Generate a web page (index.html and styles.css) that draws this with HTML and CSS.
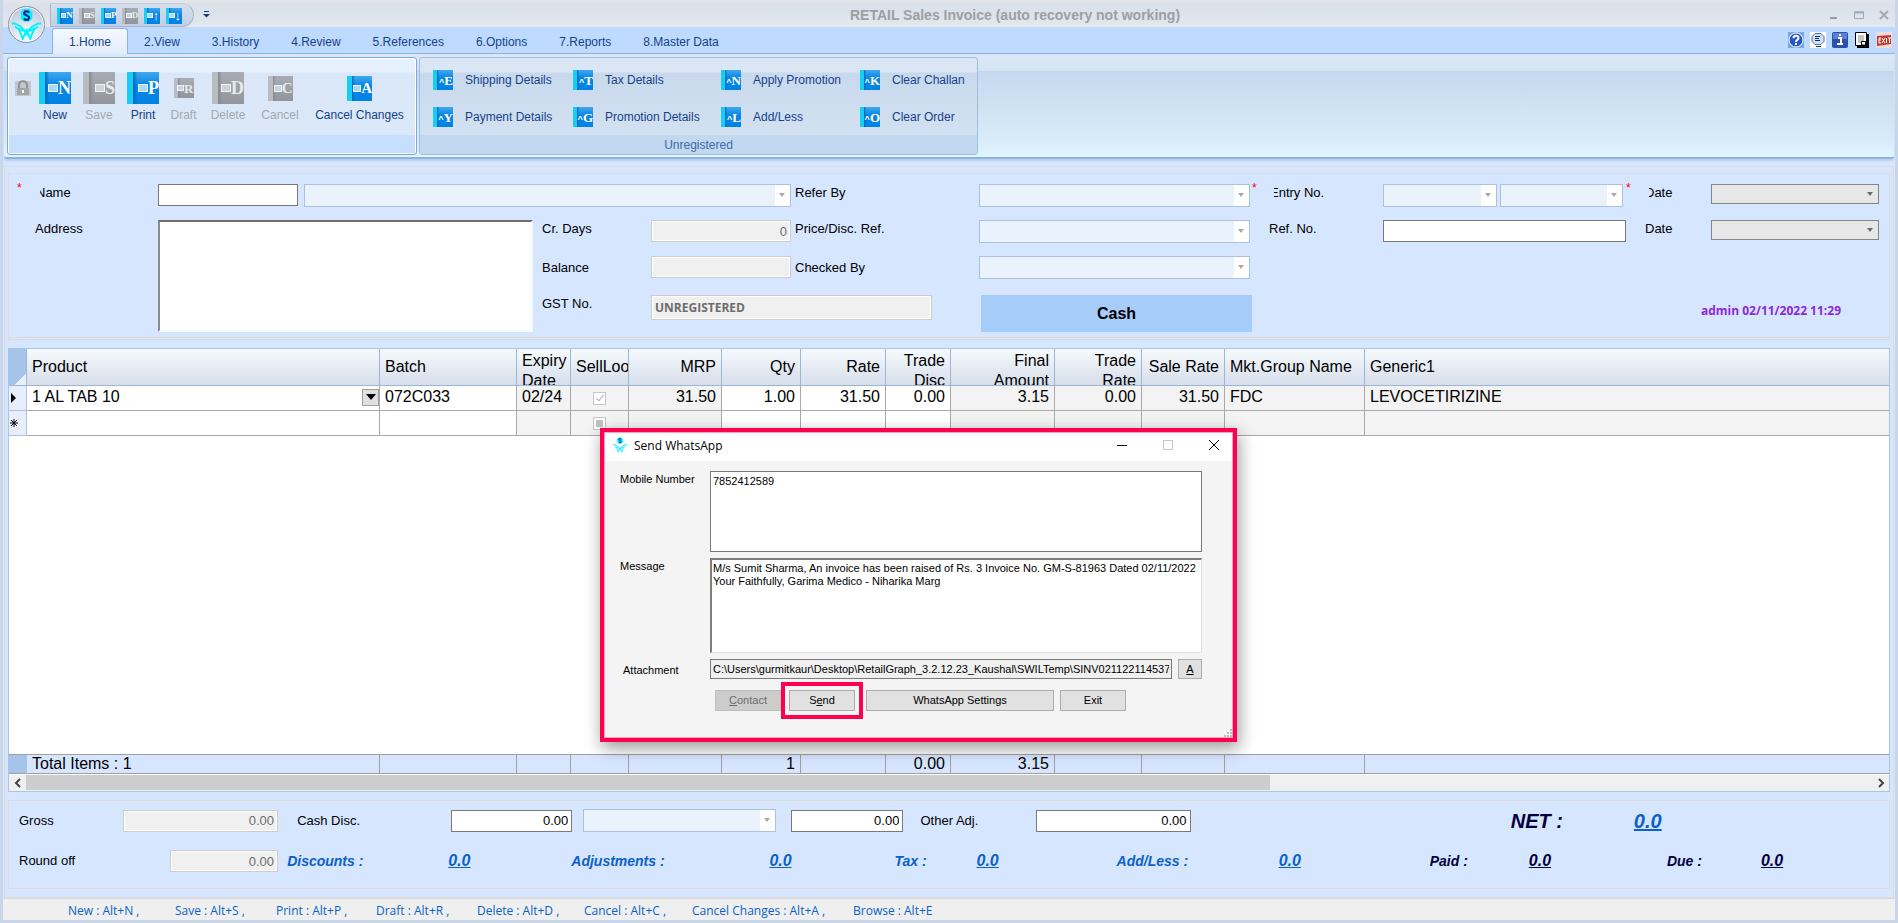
FILE: index.html
```
<!DOCTYPE html>
<html lang="en">
<head>
    <meta charset="UTF-8">
    <meta name="viewport" content="width=device-width, initial-scale=1.0">
    <title>RETAIL Sales Invoice</title>
    <link rel="stylesheet" href="styles.css">
</head>
<body>

<svg class="defs" aria-hidden="true">
    <symbol id="logo" viewBox="0 0 30 32">
        <path d="M12 0h6l3 3v7l-3 3h-6l-3-3V3z" fill="#00f4ff"/>
        <path d="M17.500 4l-1-1.500h-3L12.500 4v1l5 3v1.500l-1 1.500h-3l-1-1.500" fill="none" stroke="#00168c" stroke-width="2"/>
        <path d="M0 15h3l6 3 4 4 2 4 2-4 4-4 6-3h3M3 18l4 3 2 4 2 6 4-9 4 9 2-6 2-4 4-3M7 20l5 3M23 20l-5 3" fill="none" stroke="#00f4ff" stroke-width="2"/>
    </symbol>
</svg>

<!-- title bar -->
<header class="titlebar">
    <button class="orb" aria-label="Menu"><svg><use href="#logo"/></svg></button>
    <div class="quick">
        <button class="book xs" aria-label="New">N</button>
        <button class="book xs off" aria-label="Save">S</button>
        <button class="book xs" aria-label="Print">P</button>
        <button class="book xs off" aria-label="Delete">D</button>
        <button class="book xs arrow" aria-label="Previous">&#8593;</button>
        <button class="book xs arrow" aria-label="Next">&#8595;</button>
    </div>
    <button class="more" aria-label="More"><svg viewBox="0 0 7 7"><path d="M1 .5h5" stroke="#1a3c7c"/><path d="M0 3h7L3.500 6.500z" fill="#1a3c7c"/></svg></button>
    <h1>RETAIL Sales Invoice (auto recovery not working)</h1>
    <div class="winbtns">
        <button aria-label="Minimize"><svg viewBox="0 0 10 10"><path d="M1 8h7" stroke="#9a9fa6" stroke-width="2"/></svg></button>
        <button aria-label="Maximize"><svg viewBox="0 0 10 10"><path d="M.5 2h9v6.500h-9z" fill="none" stroke="#a4abb8"/><path d="M0 2.500h10" stroke="#a4abb8" stroke-width="2"/></svg></button>
        <button aria-label="Close"><svg viewBox="0 0 10 10"><path d="M1 1l8 8M9 1l-8 8" stroke="#a4a9b0" stroke-width="2"/></svg></button>
    </div>
</header>

<nav class="tabs">
    <a href="#" class="active">1.Home</a>
    <a href="#">2.View</a>
    <a href="#">3.History</a>
    <a href="#">4.Review</a>
    <a href="#">5.References</a>
    <a href="#">6.Options</a>
    <a href="#">7.Reports</a>
    <a href="#">8.Master Data</a>
    <div class="tools">
        <button aria-label="Help"><svg viewBox="0 0 16 16"><path d="M0 0h16v16H0z" fill="#7fa6d8"/><circle cx="8" cy="8" r="7" fill="#2458c8" stroke="#fff"/><path d="M5.500 6.200C5.500 3 10.500 3 10.500 6c0 2-2.500 1.800-2.500 4M8 11v2" fill="none" stroke="#fff" stroke-width="2"/></svg></button>
        <button aria-label="Support"><svg viewBox="0 0 16 16"><path d="M0 0h16v16H0z" fill="#fff"/><path d="M5 1.500h6l3 3v5l-3 3H5l-3-3v-5z" fill="#cfe0fa" stroke="#5474a8"/><path d="M5 4.500h5M5 6.500h4M5 8.500h5M6 14.500h5" stroke="#1e2c5a"/></svg></button>
        <button aria-label="Info"><svg viewBox="0 0 16 16"><rect width="16" height="16" rx="2" fill="#2c50b0"/><path d="M1 1h14v6H1z" fill="#5c80d4"/><path d="M6 6h3v6M5 12h6M7 3h2" fill="none" stroke="#fff" stroke-width="2"/></svg></button>
        <button aria-label="Notes"><svg viewBox="0 0 16 16"><path d="M3 2h12v14H3z" fill="#000"/><path d="M1.500.5h11v13h-11z" fill="#fff" stroke="#000"/><path d="M4 4h6M4 6h6M4 8h6M4 10h3" stroke="#8a8a8a"/><path d="M7.500 13V9.500h4V13z" fill="#fff" stroke="#000"/></svg></button>
        <button aria-label="Exit"><svg viewBox="0 0 16 16"><path d="M0 0h16v16H0z" fill="#ecdcdc"/><path d="M1 4l14-1v9L1 14z" fill="#c23a34"/><path d="M5 6H3v5h2M3 8h2M6 6l3 5M9 6l-3 5M10.500 6v5M12 6h3M13.500 6v5" fill="none" stroke="#fff"/></svg></button>
    </div>
</nav>

<!-- ribbon -->
<section class="ribbon">
    <div class="group main">
        <div class="bigbtns">
            <svg class="lock" viewBox="0 0 16 16"><path d="M0 1h16v15H0z" fill="#c3c6cb"/><path d="M4 8V5c0-5 8-5 8 0v3" fill="none" stroke="#8f9297" stroke-width="2"/><path d="M2 8h12v7H2z" fill="#a2a5aa"/><path d="M8 10v3" stroke="#fff" stroke-width="2"/></svg>
            <button><span class="ico"><span class="book lg">N</span></span>New</button>
            <button disabled><span class="ico"><span class="book lg off">S</span></span>Save</button>
            <button><span class="ico"><span class="book lg">P</span></span>Print</button>
            <button disabled class="draft"><span class="ico"><span class="book sm off">R</span></span>Draft</button>
            <button disabled class="del"><span class="ico"><span class="book lg off">D</span></span>Delete</button>
            <button disabled class="del"><span class="ico"><span class="book md off">C</span></span>Cancel</button>
            <button class="wide"><span class="ico"><span class="book md">A</span></span>Cancel Changes</button>
        </div>
        <div class="caption"></div>
    </div>
    <div class="group detail">
        <div class="smallbtns">
            <button><span class="book sm caret">E</span>Shipping Details</button>
            <button><span class="book sm caret">T</span>Tax Details</button>
            <button><span class="book sm caret">N</span>Apply Promotion</button>
            <button><span class="book sm caret">K</span>Clear Challan</button>
            <button><span class="book sm caret">Y</span>Payment Details</button>
            <button><span class="book sm caret">G</span>Promotion Details</button>
            <button><span class="book sm caret">L</span>Add/Less</button>
            <button><span class="book sm caret">O</span>Clear Order</button>
        </div>
        <div class="caption">Unregistered</div>
    </div>
</section>

<main>
    <!-- party details -->
    <form class="party">
        <div class="lbl req"><label class="cut" for="name">Name</label></div>
        <input class="box" id="name" type="text">
        <span class="combo name2"><select disabled aria-label="Party"></select></span>
        <label class="lbl" for="referby">Refer By</label>
        <span class="combo refer"><select id="referby" disabled></select></span>
        <div class="lbl req entry"><label class="cut" for="entry">Entry No.</label></div>
        <div class="pair">
            <span class="combo"><select id="entry" disabled></select></span>
            <span class="combo"><select disabled aria-label="Entry number"></select></span>
        </div>
        <div class="lbl req date"><label class="cut" for="date1">Date</label></div>
        <span class="combo grey"><select id="date1" disabled></select></span>

        <label class="lbl address" for="address">Address</label>
        <textarea id="address"></textarea>
        <label class="lbl" for="crdays">Cr. Days</label>
        <input class="box ro narrow" id="crdays" type="text" value="0" disabled>
        <label class="lbl" for="priceref">Price/Disc. Ref.</label>
        <span class="combo refer"><select id="priceref" disabled></select></span>
        <label class="lbl" for="refno">Ref. No.</label>
        <input class="box refno" id="refno" type="text">
        <label class="lbl" for="date2">Date</label>
        <span class="combo grey"><select id="date2" disabled></select></span>

        <label class="lbl c4 r3" for="balance">Balance</label>
        <input class="box ro narrow" id="balance" type="text" disabled>
        <label class="lbl r3" for="checkedby">Checked By</label>
        <span class="combo refer"><select id="checkedby" disabled></select></span>

        <label class="lbl c4" for="gst">GST No.</label>
        <input class="box ro gst" id="gst" type="text" value="UNREGISTERED" disabled>
        <button type="button" class="cash">Cash</button>
        <div class="stamp">admin 02/11/2022 11:29</div>
    </form>

    <!-- item grid -->
    <section class="grid">
        <table>
            <colgroup>
                <col class="w-mark"><col class="w-product"><col class="w-batch"><col class="w-exp"><col class="w-sell"><col class="w-mrp"><col class="w-qty"><col class="w-rate"><col class="w-disc"><col class="w-final"><col class="w-trate"><col class="w-sale"><col class="w-mkt"><col>
            </colgroup>
            <thead>
                <tr>
                    <th class="mark"></th>
                    <th>Product</th>
                    <th>Batch</th>
                    <th><div class="two">Expiry<br>Date</div></th>
                    <th>SellLoo</th>
                    <th class="num">MRP</th>
                    <th class="num">Qty</th>
                    <th class="num">Rate</th>
                    <th class="num"><div class="two">Trade<br>Disc</div></th>
                    <th class="num"><div class="two">Final<br>Amount</div></th>
                    <th class="num"><div class="two">Trade<br>Rate</div></th>
                    <th class="num">Sale Rate</th>
                    <th>Mkt.Group Name</th>
                    <th>Generic1</th>
                </tr>
            </thead>
            <tbody>
                <tr>
                    <td class="mark"><svg viewBox="0 0 16 16"><path d="M2 3v10l5-5z"/></svg></td>
                    <td><div class="cell">1 AL TAB 10<button class="drop" aria-label="Pick product"></button></div></td>
                    <td>072C033</td>
                    <td class="ro">02/24</td>
                    <td class="ro chk"><input type="checkbox" class="on" checked disabled aria-label="Sell loose"></td>
                    <td class="ro num">31.50</td>
                    <td class="num">1.00</td>
                    <td class="num">31.50</td>
                    <td class="num">0.00</td>
                    <td class="ro num">3.15</td>
                    <td class="ro num">0.00</td>
                    <td class="ro num">31.50</td>
                    <td class="ro">FDC</td>
                    <td class="ro">LEVOCETIRIZINE</td>
                </tr>
                <tr>
                    <td class="mark"><svg viewBox="0 0 16 16"><path d="M5 4v8M1 8h8M2 5l6 6M8 5l-6 6" stroke="#000"/></svg></td>
                    <td></td>
                    <td></td>
                    <td class="ro"></td>
                    <td class="ro chk"><input type="checkbox" class="mixed" disabled aria-label="Sell loose"></td>
                    <td class="ro"></td>
                    <td></td>
                    <td></td>
                    <td></td>
                    <td class="ro"></td>
                    <td class="ro"></td>
                    <td class="ro"></td>
                    <td class="ro"></td>
                    <td class="ro"></td>
                </tr>
            </tbody>
        </table>
        <table class="sum">
            <colgroup>
                <col class="w-mark"><col class="w-product"><col class="w-batch"><col class="w-exp"><col class="w-sell"><col class="w-mrp"><col class="w-qty"><col class="w-rate"><col class="w-disc"><col class="w-final"><col class="w-trate"><col class="w-sale"><col class="w-mkt"><col>
            </colgroup>
            <tbody>
                <tr>
                    <td class="mark"></td>
                    <td>Total Items : 1</td>
                    <td></td><td></td><td></td><td></td>
                    <td class="num">1</td>
                    <td></td>
                    <td class="num">0.00</td>
                    <td class="num">3.15</td>
                    <td></td><td></td><td></td><td></td>
                </tr>
            </tbody>
        </table>
        <div class="scroll">
            <button aria-label="Scroll left"><svg viewBox="0 0 8 10"><path d="M6 1L2 5l4 4" fill="none" stroke="#444" stroke-width="2"/></svg></button>
            <div class="track"><div class="thumb"></div></div>
            <button aria-label="Scroll right"><svg viewBox="0 0 8 10"><path d="M2 1l4 4-4 4" fill="none" stroke="#444" stroke-width="2"/></svg></button>
        </div>
    </section>

    <!-- totals -->
    <section class="totals">
        <div class="row1">
            <label for="gross">Gross</label>
            <input class="box ro w155" id="gross" type="text" value="0.00" disabled>
            <label for="cashdisc">Cash Disc.</label>
            <input class="box w121" id="cashdisc" type="text" value="0.00">
            <span class="combo w193"><select disabled aria-label="Discount type"></select></span>
            <input class="box w112" type="text" value="0.00" aria-label="Discount amount">
            <label for="otheradj">Other Adj.</label>
            <input class="box w155" id="otheradj" type="text" value="0.00">
            <span class="net">NET :</span>
            <a href="#" class="net blue">0.0</a>
        </div>
        <div class="row2">
            <label for="roundoff">Round off</label>
            <input class="box ro w108" id="roundoff" type="text" value="0.00" disabled>
            <span class="blue">Discounts :</span>
            <a href="#" class="blue">0.0</a>
            <span class="blue">Adjustments :</span>
            <a href="#" class="blue">0.0</a>
            <span class="blue">Tax :</span>
            <a href="#" class="blue">0.0</a>
            <span class="blue">Add/Less :</span>
            <a href="#" class="blue">0.0</a>
            <span>Paid :</span>
            <a href="#">0.0</a>
            <span>Due :</span>
            <a href="#">0.0</a>
        </div>
    </section>
</main>

<footer class="status">
    <span>New : Alt+N ,</span>
    <span>Save : Alt+S ,</span>
    <span>Print : Alt+P ,</span>
    <span>Draft : Alt+R ,</span>
    <span>Delete : Alt+D ,</span>
    <span>Cancel : Alt+C ,</span>
    <span>Cancel Changes : Alt+A ,</span>
    <span>Browse : Alt+E</span>
</footer>

<!-- send whatsapp window -->
<div class="dialog" role="dialog" aria-label="Send WhatsApp">
    <div class="dlg-title">
        <svg class="dlg-logo"><use href="#logo"/></svg>
        <span>Send WhatsApp</span>
        <div class="dlg-win">
            <button aria-label="Minimize"><svg viewBox="0 0 12 12"><path d="M1 6.500h10" stroke="#000"/></svg></button>
            <button aria-label="Maximize" disabled><svg viewBox="0 0 12 12"><path d="M1.500 1.500h9v9h-9z" fill="none" stroke="#c4c4c4"/></svg></button>
            <button aria-label="Close"><svg viewBox="0 0 12 12"><path d="M1 1l10 10M11 1L1 11" stroke="#000"/></svg></button>
        </div>
    </div>
    <form class="dlg-body">
        <label for="mobile">Mobile Number</label>
        <textarea id="mobile" class="mobile">7852412589</textarea>
        <label for="msg">Message</label>
        <textarea id="msg" class="msg">M/s Sumit Sharma, An invoice has been raised of Rs. 3 Invoice No. GM-S-81963 Dated 02/11/2022
Your Faithfully, Garima Medico - Niharika Marg</textarea>
        <label for="attach" class="mid">Attachment</label>
        <div class="attach">
            <input id="attach" type="text" readonly value="C:\Users\gurmitkaur\Desktop\RetailGraph_3.2.12.23_Kaushal\SWILTemp\SINV021122114537">
            <button type="button"><u>A</u></button>
        </div>
        <div class="dlg-btns">
            <button type="button" disabled><u>C</u>ontact</button>
            <button type="button" class="send">S<u>e</u>nd</button>
            <button type="button" class="settings">WhatsApp Settings</button>
            <button type="button">Exit</button>
        </div>
    </form>
    <svg class="grip" viewBox="0 0 8 8"><path d="M6 0h2v2H6zM3 3h2v2H3zM6 3h2v2H6zM0 6h2v2H0zM3 6h2v2H3zM6 6h2v2H6z" fill="#bdbdbd"/></svg>
</div>

</body>
</html>
```
FILE: styles.css
```
* {
    box-sizing: border-box;
}

body {
    margin: 0;
    min-height: 100vh;
    position: relative;
    display: flex;
    flex-direction: column;
    border: solid #c9d6e9;
    border-width: 0 3px 3px;
    background: #d6e6ff;
    font-family: "Liberation Sans", Arial, sans-serif;
    font-size: 13px;
    line-height: 16px;
    color: #000;
}

button, input, select, textarea {
    font: inherit;
    color: inherit;
    margin: 0;
    padding: 0;
    border: 0;
    border-radius: 0;
    background: none;
    outline: none;
}

textarea {
    resize: none;
    display: block;
}

.defs {
    position: absolute;
    width: 0;
    height: 0;
}

/* title bar */
.titlebar {
    height: 27px;
    display: flex;
    align-items: center;
    position: relative;
    padding: 2px 6px 0 47px;
    background: linear-gradient(#e3e6eb, #dbe1ea 20%, #dce2ea 45%, #e4e9ec);
}

.orb {
    position: absolute;
    left: 5px;
    top: 6px;
    width: 37px;
    height: 37px;
    border: 1px solid #8793a8;
    border-radius: 50%;
    background: radial-gradient(circle at 50% 80%, #fff, #d2d9e6 55%, #b4bdcc);
    box-shadow: inset 0 0 0 1px #f3f6fb;
    z-index: 1;
}

.orb svg {
    width: 29px;
    height: 31px;
    display: block;
    margin: 2px 3px;
}

.quick {
    display: flex;
    gap: 6px;
    height: 24px;
    padding: 4px 11px 0 6px;
    border: 1px solid #a9b6cc;
    border-top-color: #c4cddb;
    border-radius: 0 12px 12px 0;
    background: linear-gradient(#d5dfee, #c3cfe2);
    width: 144px;
}

.more {
    width: 8px;
    margin-left: 9px;
}

.more svg {
    width: 7px;
    height: 7px;
    display: block;
}

.titlebar h1 {
    flex: 1;
    margin: 0 10px 0 0;
    font-size: 14px;
    font-weight: bold;
    text-align: center;
    color: #9c9fa3;
}

.winbtns {
    display: flex;
    gap: 15px;
}

.winbtns svg {
    width: 10px;
    height: 10px;
    display: block;
}

/* book shaped icons */
.book {
    display: inline-flex;
    align-items: center;
    justify-content: flex-end;
    color: #fff;
    font-family: "Liberation Serif", serif;
    font-weight: bold;
    line-height: 1;
    background: linear-gradient(90deg, #16cdf5 18%, #0567b8 19%, transparent 32%), linear-gradient(#3fa8ef, #0a86e4 40%, #0083e6);
}

.book::before {
    content: "";
    width: 24%;
    height: 20%;
    background: #a9d8fa;
    border: 1px solid #e8f6ff;
}

.book.off {
    background: linear-gradient(90deg, #b9bdc2 18%, #868a90 19%, transparent 32%), linear-gradient(#a9adb3, #92969c);
    color: #e8eaec;
}

.book.off::before {
    background: #d0d3d6;
}

.book.caret::before {
    content: "^";
    width: auto;
    height: auto;
    padding-top: 4px;
    border: 0;
    background: none;
    font: bold 9px/9px "Liberation Sans", sans-serif;
}

.xs { width: 16px; height: 16px; font-size: 9px; }
.sm { width: 20px; height: 20px; font-size: 13px; }
.md { width: 25px; height: 25px; font-size: 15px; }
.lg { width: 32px; height: 32px; font-size: 18px; }

.xs.arrow {
    font-size: 13px;
    padding-right: 1px;
}

/* tabs */
.tabs {
    height: 27px;
    display: flex;
    align-items: flex-end;
    padding-left: 49px;
    background: #bedaff;
    border-bottom: 1px solid #8fb4e4;
    font-size: 12px;
}

.tabs a {
    padding: 5px 16px 3px;
    color: #15428b;
    text-decoration: none;
}

.tabs a.active {
    margin-bottom: -1px;
    padding-bottom: 4px;
    border: 1px solid #8db2e3;
    border-bottom: 0;
    border-radius: 3px 3px 0 0;
    background: linear-gradient(#f4f8fe, #e2edfb);
}

.tools {
    margin-left: auto;
    display: flex;
    gap: 6px;
    padding: 0 3px 5px 0;
}

.tools svg {
    width: 16px;
    height: 16px;
    display: block;
}

/* ribbon */
.ribbon {
    display: flex;
    gap: 2px;
    margin: 0 1px;
    padding: 3px 3px 2px;
    border-bottom: 2px solid #8fb3dc;
    border-radius: 0 0 3px 3px;
    background: linear-gradient(#dbe8f7, #d6e3f3 16%, #c6d8ee 17%, #d9ecf8 85%, #e1f5ff);
    box-shadow: 0 2px 2px #b7cff0;
}

.group {
    height: 98px;
    display: flex;
    flex-direction: column;
    border: 1px solid #9fbfdf;
    border-radius: 3px;
}

.group.main {
    width: 410px;
    border-color: #7fa8d6;
    background: linear-gradient(#e6f0ff 14px, #dae7f8 15px, #dce9f9);
    box-shadow: inset 0 0 0 1px #fff;
}

.group.detail {
    width: 559px;
    background: linear-gradient(#dae6f4 14px, #c9d9ed 15px, #d5e4f2);
}

.group.main .caption {
    background: #c7dfff;
    margin: auto 1px 1px;
    height: 18px;
}

.caption {
    height: 19px;
    margin-top: auto;
    padding-top: 2px;
    font-size: 12px;
    text-align: center;
    color: #3e6aaa;
    background: #c1d8f0;
}

.bigbtns {
    display: flex;
    padding: 14px 0 0 7px;
    font-size: 12px;
    color: #15428b;
}

.bigbtns button {
    width: 44px;
    white-space: nowrap;
}

.bigbtns button:disabled {
    color: #a2a8b0;
}

.bigbtns .draft { width: 37px; }
.bigbtns .del { width: 52px; }
.bigbtns .wide { width: 107px; }

.ico {
    height: 32px;
    margin-bottom: 3px;
    display: flex;
    align-items: center;
    justify-content: center;
}

.lock {
    width: 16px;
    height: 16px;
    margin: 8px 2px 0 0;
}

.smallbtns {
    display: grid;
    grid-template-columns: 140px 148px 139px 1fr;
    row-gap: 17px;
    padding: 12px 0 0 13px;
    font-size: 12px;
    color: #15428b;
}

.smallbtns button {
    display: flex;
    align-items: center;
    gap: 12px;
}

main {
    flex: 1;
    display: flex;
    flex-direction: column;
    margin: 7px 1px 0;
    padding: 6px 3px 8px;
    border: 1px solid #dcdcdc;
}

/* fields */
.box {
    height: 22px;
    border: 1px solid #7a7a7a;
    background: #fff;
    padding: 0 3px;
    min-width: 0;
}

.box.ro {
    border-color: #ccc;
    background: #f0f0f0;
    box-shadow: inset 0 0 0 1px #fff;
    color: #6d6d6d;
}

.combo {
    position: relative;
    display: block;
    height: 23px;
}

.combo select {
    appearance: none;
    display: block;
    width: 100%;
    height: 100%;
    border: 1px solid #abc1de;
    background: #eaf2fb;
    opacity: 1;
}

.combo::before {
    content: "";
    position: absolute;
    right: 1px;
    top: 1px;
    bottom: 1px;
    width: 15px;
    background: #fff;
}

.combo::after {
    content: "";
    position: absolute;
    right: 6px;
    top: 9px;
    border: 3px solid transparent;
    border-top: 4px solid #a9a9a9;
    border-bottom: 0;
}

.combo.grey {
    height: 20px;
}

.combo.grey select {
    border-color: #858585;
    background: #e7e7e7;
}

.combo.grey::before {
    background: none;
}

.combo.grey::after {
    top: 8px;
    border-top-color: #6d6d6d;
}

/* party details */
.party {
    display: grid;
    grid-template-columns: 139px 146fr 238fr 109px 144fr 184px 290fr 114px 262fr 66px 168fr;
    grid-template-rows: 36px 36px 39px 37px;
    align-items: start;
    padding: 10px 10px 5px;
    border: 1px solid #dcdcdc;
    border-bottom: 3px double #dcdcdc;
}

.lbl {
    padding-top: 1px;
}

.party .box.narrow, .name2 {
    margin-right: 4px;
}

.party #name {
    margin-right: 6px;
}

.name2 {
    grid-column: 3 / 6;
}

.refer {
    margin-right: 19px;
}

.req::before {
    content: "*";
    position: absolute;
    left: -2px;
    top: -4px;
    color: #f00;
    font-size: 12px;
}

.lbl.req {
    position: relative;
    padding-left: 21px;
}

.lbl.address {
    padding-left: 16px;
}

.lbl.entry {
    padding-left: 5px;
}

.lbl.entry::before {
    left: -17px;
}

.lbl.date {
    padding-left: 4px;
}

.lbl.date::before {
    left: -19px;
}

/* required labels lose their first pixels */
.cut {
    display: block;
    overflow: hidden;
    text-indent: -4px;
}

.pair {
    display: grid;
    grid-template-columns: 114fr 123fr;
    gap: 3px;
    margin-right: 22px;
}

.refno {
    margin-right: 19px;
}

#address {
    grid-column: 2 / 4;
    grid-row: 2 / 5;
    height: 112px;
    margin-right: 9px;
    border: 2px solid;
    border-color: #6f6b6f #f4f8ff #f4f8ff #8a8a8a;
    background: #fff;
}

.c4 {
    grid-column: 4;
}

.lbl.r3 {
    padding-top: 4px;
}

#crdays {
    text-align: right;
}

.gst {
    grid-column: 5 / 7;
    height: 25px;
    margin-right: 47px;
    font-weight: bold;
    font-family: "Open Sans", sans-serif;
    font-size: 12px;
}

.cash {
    height: 37px;
    margin: 0 17px 0 2px;
    background: #a6cdf9;
    font-size: 16px;
    font-weight: bold;
}

.stamp {
    grid-column: 10 / 12;
    padding: 8px 38px 0 0;
    text-align: right;
    font-family: "Open Sans", sans-serif;
    font-weight: bold;
    font-size: 12px;
    color: #8c28dc;
}

/* item grid */
.grid {
    flex: 1;
    display: flex;
    flex-direction: column;
    margin-top: 8px;
    border: 1px solid #abc4e4;
    background: #fff;
}

.grid table {
    width: 100%;
    table-layout: fixed;
    border-collapse: separate;
    border-spacing: 0;
    font-size: 16px;
    line-height: 20px;
}

.w-mark { width: 18px; }
.w-product { width: 353px; }
.w-batch { width: 137px; }
.w-exp { width: 54px; }
.w-sell { width: 58px; }
.w-mrp { width: 93px; }
.w-qty { width: 79px; }
.w-rate { width: 85px; }
.w-disc { width: 65px; }
.w-final { width: 104px; }
.w-trate { width: 87px; }
.w-sale { width: 83px; }
.w-mkt { width: 140px; }

.grid th {
    height: 37px;
    padding: 0 0 0 5px;
    font-weight: normal;
    text-align: left;
    white-space: nowrap;
    overflow: hidden;
    background: linear-gradient(#f6fafc, #d6deeb);
    border-right: 1px solid #9db6d3;
    border-bottom: 1px solid #9db6d3;
}

.grid th.num {
    text-align: right;
    padding: 0 5px 0 0;
}

.two {
    height: 36px;
    padding-top: 2px;
    overflow: hidden;
}

.grid th.mark {
    background: linear-gradient(135deg, #a6c3ea 78%, #e8f0fa 79%);
}

.grid td {
    height: 25px;
    padding: 0 0 2px 5px;
    border-right: 1px solid #a9a9a9;
    border-bottom: 1px solid #a9a9a9;
    white-space: nowrap;
}

.grid td.num {
    text-align: right;
    padding: 0 5px 2px 0;
}

.grid td.ro {
    background: #f3f3f3;
}

.grid th:last-child, .grid td:last-child {
    border-right: 0;
}

.grid td.mark {
    padding: 0;
    background: #e6effb;
    border-color: #a9c2e2;
}

.mark svg {
    width: 16px;
    height: 16px;
    display: block;
}

.cell {
    display: flex;
    align-items: center;
    justify-content: space-between;
}

.drop {
    width: 17px;
    height: 17px;
    border: 1px solid #a0a0a0;
    background: #e0e0e0;
    display: grid;
    place-items: center;
}

.drop::after {
    content: "";
    border: 5px solid transparent;
    border-top: 6px solid #000;
    border-bottom: 0;
}

.grid td.chk {
    padding: 0;
    text-align: center;
    line-height: 1;
}

.chk input {
    appearance: none;
    width: 13px;
    height: 13px;
    border: 1px solid #c6c6c6;
    background: #fff;
    vertical-align: middle;
    position: relative;
}

.chk .on::after {
    content: "";
    position: absolute;
    left: 4px;
    top: 0;
    width: 3px;
    height: 7px;
    border: solid #b0b0b0;
    border-width: 0 1px 1px 0;
    transform: rotate(40deg);
}

.chk .mixed::after {
    content: "";
    position: absolute;
    inset: 2px;
    background: #c2c2c2;
}

.grid .sum {
    margin-top: auto;
    border-top: 1px solid #a0a0a0;
}

.grid .sum td {
    height: 19px;
    padding-bottom: 0;
    line-height: 18px;
    background: #d6e6ff;
    border-color: #a0a0a0;
}

.grid .sum td.mark {
    background: #a6c3ea;
    border-right-color: #a6c3ea;
}

.scroll {
    display: flex;
    height: 17px;
    padding-bottom: 1px;
    background: #f0f0f0;
    border-top: 1px solid #fff;
}

.scroll button {
    width: 17px;
    display: grid;
    place-items: center;
}

.scroll svg {
    width: 8px;
    height: 10px;
}

.track {
    flex: 1;
}

.thumb {
    width: 67.400%;
    height: 100%;
    background: #cdcdcd;
}

/* totals */
.totals {
    margin-top: 8px;
    padding: 8px 9px 16px 10px;
    border: 1px solid #dcdcdc;
}

.row1, .row2 {
    display: grid;
    align-items: center;
    height: 22px;
}

.row1 {
    grid-template-columns: 104fr 174fr 154fr 132fr 208fr 129fr 115fr 475fr 123fr 246fr;
    margin-bottom: 19px;
}

.row2 {
    grid-template-columns: 151fr 117fr 161fr 123fr 198fr 125fr 82fr 140fr 162fr 151fr 99fr 138fr 94fr 119fr;
    color: #00003c;
}

.row2 label {
    color: #000;
}

.totals .box {
    text-align: right;
}

.w108 { width: 108px; }
.w112 { width: 112px; }
.w121 { width: 121px; }
.w155 { width: 155px; }
.w193 { width: 193px; }

.row2 span, .row2 a {
    font-size: 14px;
    font-weight: bold;
    font-style: italic;
    color: #00003c;
    white-space: nowrap;
}

.row2 a {
    font-size: 16px;
}

.net {
    font-size: 20px;
    line-height: 22px;
    font-weight: bold;
    font-style: italic;
    color: #00003c;
}

.totals .blue {
    color: #0a62c8;
}

/* shortcuts */
.status {
    height: 22px;
    display: grid;
    grid-template-columns: 107px 101px 100px 101px 107px 108px 161px 1fr;
    align-items: center;
    padding: 2px 0 0 65px;
    border-top: 1px solid #d5d9df;
    background: #efefef;
    font-family: "Open Sans", sans-serif;
    font-size: 12px;
    color: #0a62c8;
}

/* send whatsapp window */
.dialog {
    position: absolute;
    left: calc(50% - 349px);
    top: 428px;
    width: 637px;
    border: 4px solid #ff0050;
    background: #f4f4f4;
    box-shadow: inset 0 0 0 1px #ff9fbf, 2px 6px 16px rgba(0, 0, 0, 0.4);
    font-size: 11px;
    line-height: 13px;
    z-index: 2;
}

.dlg-title {
    height: 28px;
    margin: 1px 1px 0;
    padding: 0 12px 4px 8px;
    display: flex;
    align-items: center;
    background: #fff;
    font-family: "Open Sans", sans-serif;
    font-size: 12px;
}

.dlg-logo {
    width: 14px;
    height: 16px;
    margin-right: 7px;
}

.dlg-win {
    margin-left: auto;
    display: flex;
    gap: 34px;
}

.dlg-win svg {
    width: 12px;
    height: 12px;
    display: block;
}

.dlg-body {
    display: grid;
    grid-template-columns: 90px 1fr;
    row-gap: 6px;
    padding: 10px 31px 27px 16px;
}

.dlg-body > label {
    padding-top: 2px;
}

.dlg-body .mid {
    padding: 5px 0 0 3px;
}

.dlg-body textarea {
    width: 100%;
    padding: 3px 2px;
    border: 1px solid #7a7a7a;
    background: #fff;
    white-space: pre-wrap;
    overflow: hidden;
}

.dlg-body .mobile {
    height: 81px;
}

.dlg-body .msg {
    height: 95px;
    border: solid;
    border-width: 2px 1px 1px 2px;
    border-color: #7d7d7d #e3e3e3 #e3e3e3 #7d7d7d;
    padding: 2px 1px;
}

.attach {
    display: flex;
    gap: 6px;
}

.attach input {
    flex: 1;
    min-width: 0;
    height: 20px;
    padding: 0 2px;
    border: 1px solid #7a7a7a;
    background: #f0f0f0;
}

.attach button, .dlg-btns button {
    border: 1px solid #adadad;
    background: #e1e1e1;
}

.attach button {
    width: 24px;
}

.dlg-btns {
    grid-column: 1 / 3;
    display: flex;
    padding: 5px 0 0 95px;
}

.dlg-btns button {
    width: 66px;
    height: 21px;
}

.dlg-btns button:disabled {
    background: #ccc;
    border-color: #bfbfbf;
    color: #6d6d6d;
}

.dlg-btns .send {
    margin: 0 11px 0 8px;
    outline: 4px solid #ff0050;
    outline-offset: 4px;
}

.dlg-btns .settings {
    width: 188px;
    margin-right: 6px;
}

.grip {
    position: absolute;
    right: 1px;
    bottom: 1px;
    width: 8px;
    height: 8px;
}
```
